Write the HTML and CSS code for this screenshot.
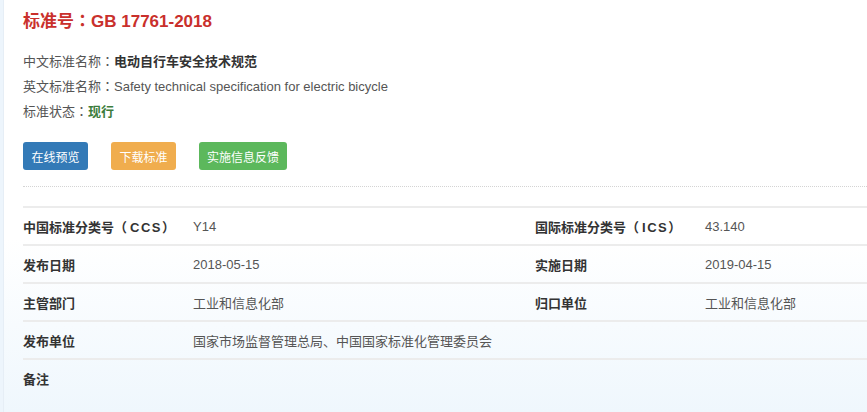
FILE: index.html
```html
<!DOCTYPE html>
<html lang="zh-CN">
<head>
<meta charset="utf-8">
<title>GB 17761-2018</title>
<link rel="stylesheet" href="styles.css">
</head>
<body>
<div class="page">
  <div class="panel">
    <h1 class="title">标准号<span class="p" lang="zh-TW">：</span>GB 17761-2018</h1>
    <div class="meta">
      <p class="meta-line">中文标准名称<span class="p" lang="zh-TW">：</span><strong>电动自行车安全技术规范</strong></p>
      <p class="meta-line">英文标准名称<span class="p" lang="zh-TW">：</span>Safety technical specification for electric bicycle</p>
      <p class="meta-line">标准状态<span class="p" lang="zh-TW">：</span><span class="status">现行</span></p>
    </div>
    <div class="actions">
      <a class="btn btn-blue">在线预览</a>
      <a class="btn btn-orange">下载标准</a>
      <a class="btn btn-green">实施信息反馈</a>
    </div>
    <div class="dotted"></div>
    <div class="table">
      <div class="row">
        <div class="lbl">中国标准分类号（<span class="code">CCS</span>）</div>
        <div class="val">Y14</div>
        <div class="lbl">国际标准分类号（<span class="code">ICS</span>）</div>
        <div class="val">43.140</div>
      </div>
      <div class="row">
        <div class="lbl">发布日期</div>
        <div class="val">2018-05-15</div>
        <div class="lbl">实施日期</div>
        <div class="val">2019-04-15</div>
      </div>
      <div class="row">
        <div class="lbl">主管部门</div>
        <div class="val">工业和信息化部</div>
        <div class="lbl">归口单位</div>
        <div class="val">工业和信息化部</div>
      </div>
      <div class="row">
        <div class="lbl">发布单位</div>
        <div class="val wide">国家市场监督管理总局、中国国家标准化管理委员会</div>
      </div>
      <div class="row last">
        <div class="lbl">备注</div>
        <div class="val wide"></div>
      </div>
    </div>
  </div>
</div>
</body>
</html>
```

FILE: styles.css
```css
html, body {
  margin: 0;
  padding: 0;
}
body {
  background: #edf5fc;
  font-family: "Liberation Sans", Arial, "Noto Sans CJK SC", sans-serif;
  color: #555;
  font-size: 13px;
}
.page {
  padding-left: 3px;
  height: 412px;
  overflow: hidden;
}
.panel {
  height: 412px;
  box-sizing: border-box;
  padding: 9px 0 0 19px;
  background: linear-gradient(to bottom, #ffffff 0%, #ffffff 58%, #eff7fd 100%);
  border-left: 1px solid #e6eef6;
}
.p {
  font-family: "Noto Sans CJK TC", sans-serif;
  line-height: 0;
}
.title {
  margin: 0;
  font-size: 17px;
  line-height: 26px;
  color: #c9302c;
  font-weight: bold;
}
.meta {
  margin-top: 14px;
}
.meta-line {
  margin: 0;
  line-height: 25px;
  color: #555;
}
.meta-line strong {
  color: #333;
}
.status {
  color: #3c7d3c;
  font-weight: bold;
}
.actions {
  display: flex;
  gap: 23px;
  margin-top: 18px;
}
.btn {
  display: inline-flex;
  align-items: center;
  justify-content: center;
  height: 28px;
  padding: 0 8px;
  font-size: 12px;
  color: #fff;
  border-radius: 3px;
  box-sizing: border-box;
  min-width: 65px;
}
.btn-blue { background: #337ab7; }
.btn-orange { background: #f0ad4e; }
.btn-green { background: #5cb85c; }
.dotted {
  margin-top: 16px;
  border-top: 1px dotted #d4d4d4;
}
.table {
  margin-top: 19px;
  border-top: 2px solid #ececec;
}
.row {
  display: grid;
  grid-template-columns: 170px 342px 170px 1fr;
  height: 36px;
  align-items: center;
  border-bottom: 2px solid #ececec;
}
.row.last {
  border-bottom: none;
}
.lbl {
  font-weight: bold;
  color: #333;
  white-space: nowrap;
}
.code {
  letter-spacing: 1.5px;
  padding-left: 3px;
}
.val {
  color: #555;
  white-space: nowrap;
}
.val.wide {
  grid-column: span 3;
}
```
